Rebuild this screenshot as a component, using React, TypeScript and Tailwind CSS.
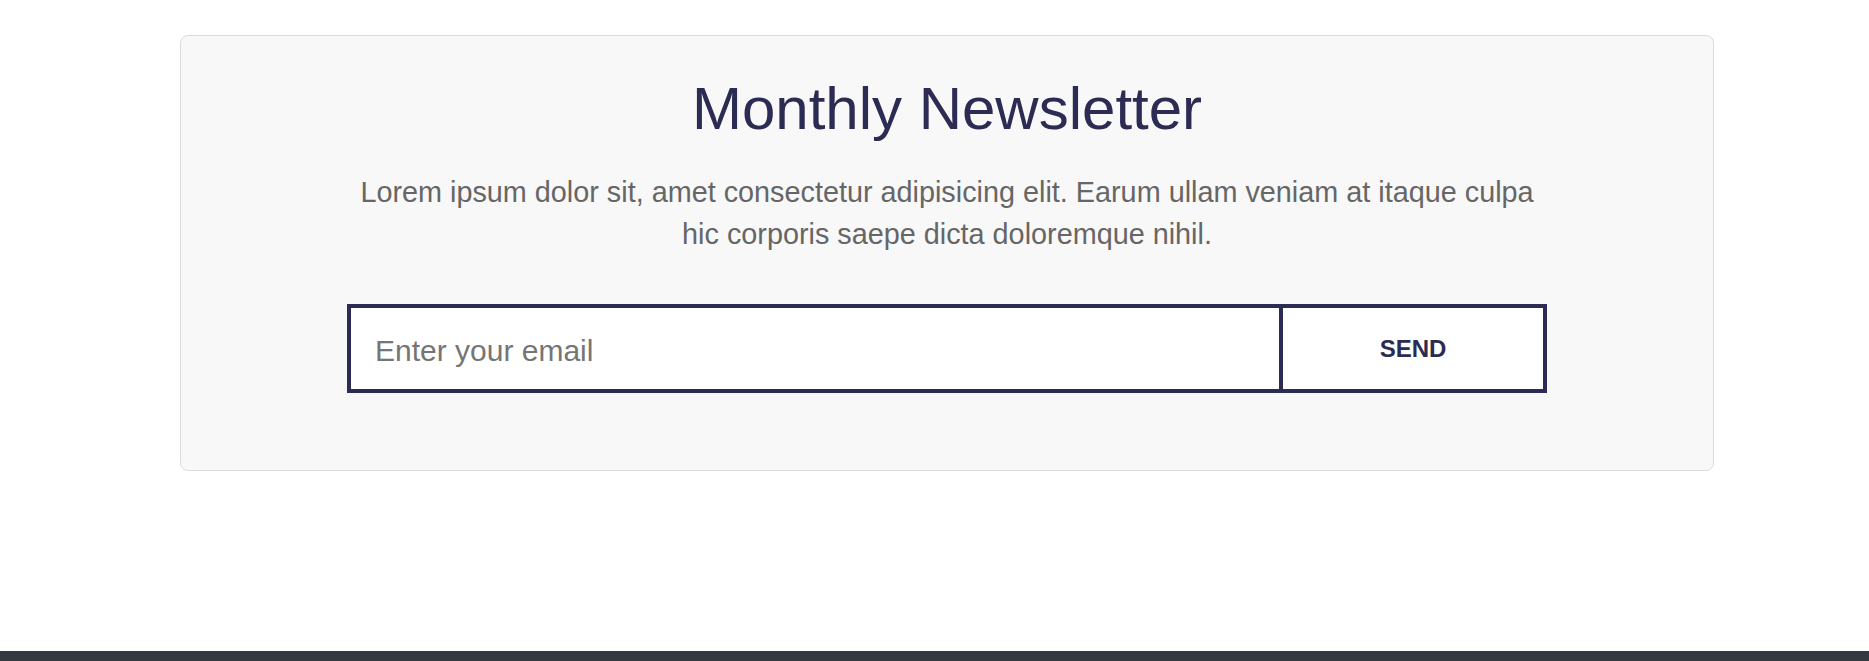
import React from 'react';

const Newsletter: React.FC = () => {
  return (
    <section className="ml-[180px] mt-[35px] w-[1534px] rounded-lg border border-[#dcdcdc] bg-[#f8f8f8] pt-[38px] pb-[77px] text-center">
      <h2 className="text-[60px] leading-[69px] font-normal text-[#2b2b54]">Monthly Newsletter</h2>
      <p className="mx-auto mt-[28px] max-w-[1200px] text-[28.8px] leading-[42px] text-[#666666]">
        Lorem ipsum dolor sit, amet consectetur adipisicing elit. Earum ullam veniam at itaque culpa hic corporis saepe dicta doloremque nihil.
      </p>
      <form
        className="mx-auto mt-[49px] flex h-[89px] w-[1200px]"
        onSubmit={e => e.preventDefault()}
      >
        <input
          type="email"
          autoFocus
          placeholder="Enter your email"
          className="h-full flex-1 border-4 border-[#2b2b54] bg-white pl-6 pt-[5px] text-[30px] text-[#333] outline-none placeholder:text-[#757575]"
        />
        <button
          type="submit"
          className="h-full w-[264px] border-4 border-l-0 border-[#2b2b54] bg-white text-[24px] font-bold text-[#2b2b54]"
        >
          SEND
        </button>
      </form>
    </section>
  );
};

export default function App() {
  return (
    <div className="min-h-[661px] bg-white font-['Liberation_Sans',Arial,sans-serif]">
      <Newsletter />
      <footer className="mt-[180px] h-[80px] bg-[#343a40]"></footer>
    </div>
  );
}
